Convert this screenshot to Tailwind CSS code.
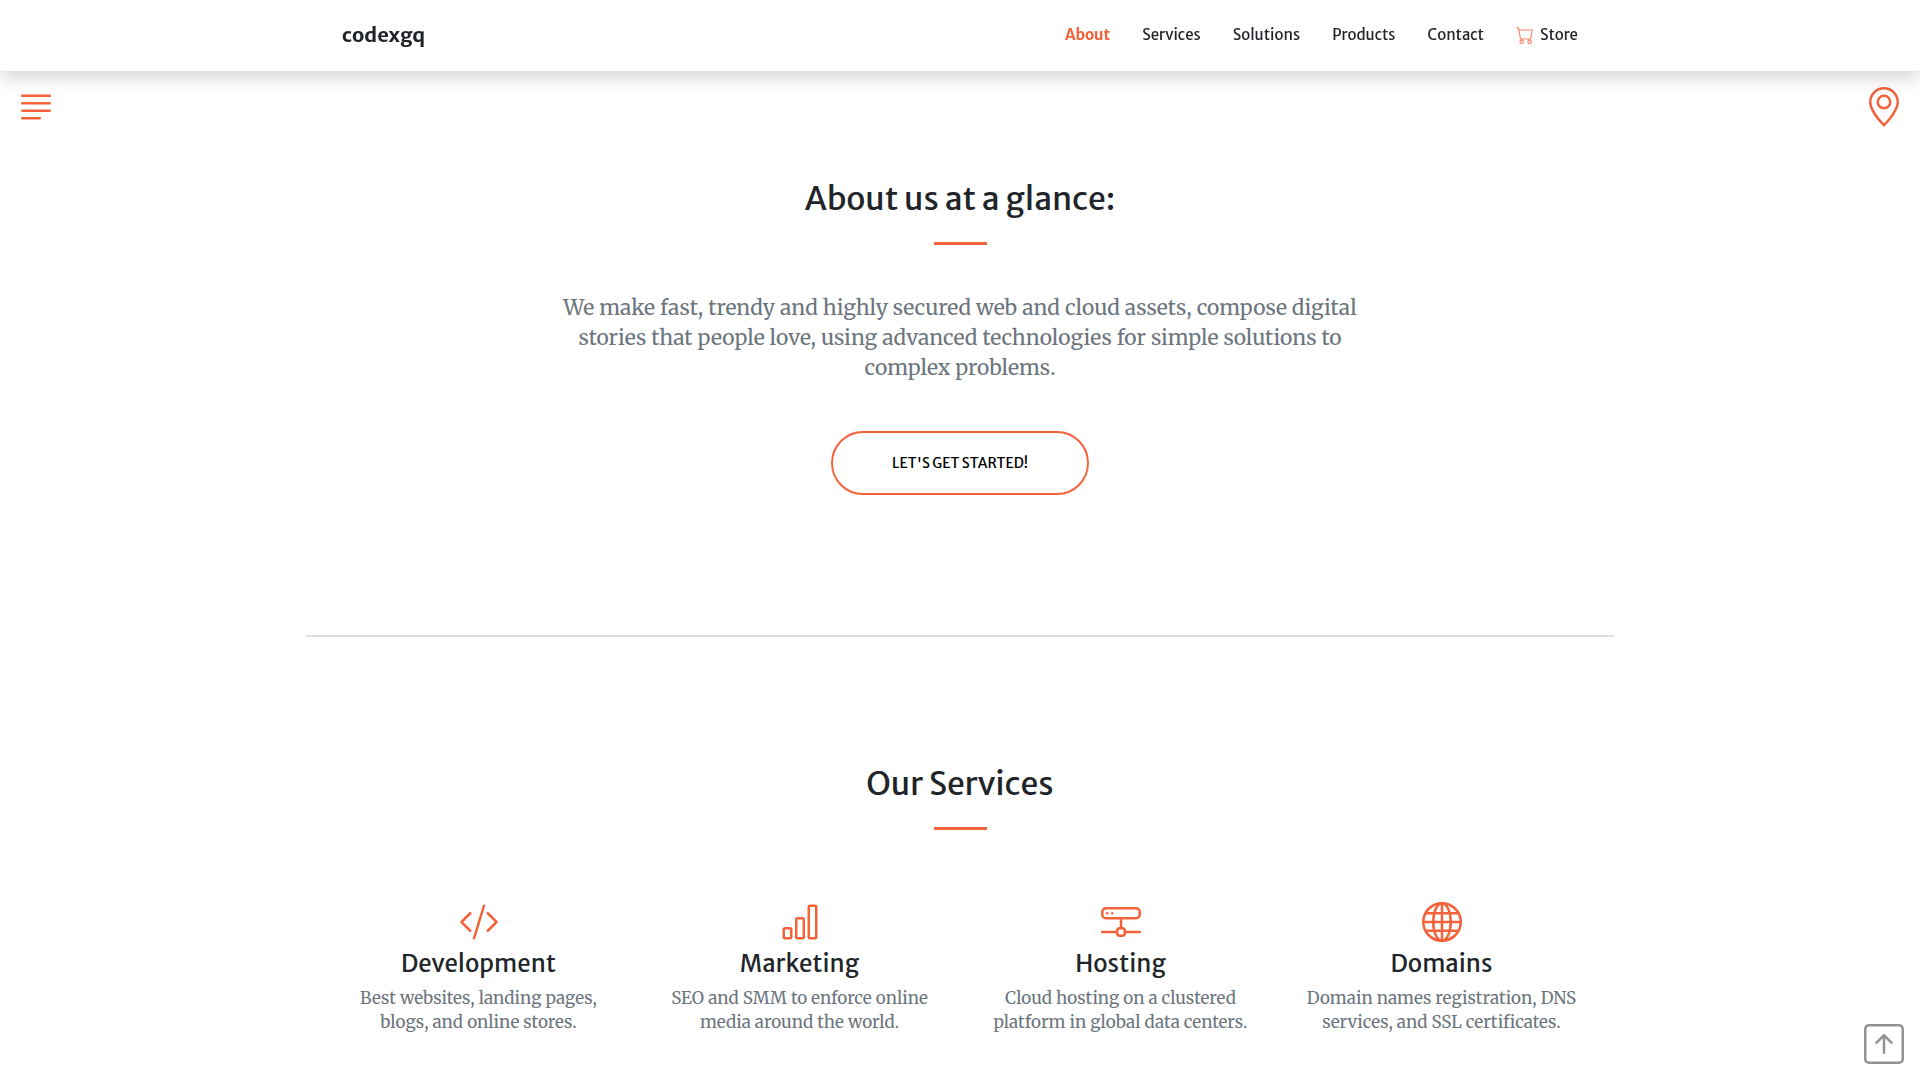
<!DOCTYPE html>
<html lang="en">
<head>
<meta charset="utf-8">
<meta name="viewport" content="width=device-width, initial-scale=1">
<title>codexgq</title>
<script src="https://cdn.jsdelivr.net/npm/@tailwindcss/browser@4"></script>
</head>
<body class="bg-white text-[#212529] font-['Merriweather','Liberation_Serif',serif] overflow-x-hidden">

<header class="fixed inset-x-0 top-0 z-20 bg-white shadow-[0_8px_16px_rgba(0,0,0,0.15)] font-['Merriweather_Sans','Open_Sans',sans-serif]">
  <div class="mx-auto flex h-[71px] max-w-[1308px] items-center justify-between px-9 pb-px">
    <a href="#" class="text-[20px] leading-[30px] font-bold">codexgq</a>
    <nav class="flex items-center gap-8 text-[15px] leading-[22px] font-medium">
      <a href="#about" class="font-bold text-[#f4623a]">About</a>
      <a href="#services">Services</a>
      <a href="#solutions">Solutions</a>
      <a href="#products">Products</a>
      <a href="#contact">Contact</a>
      <a href="#store" class="flex items-center gap-1.5">
        <svg class="size-[18px] text-[#f4623a]/80" viewBox="0 0 16 16" fill="currentColor" aria-hidden="true"><path d="M0 1.5A.5.5 0 0 1 .5 1H2a.5.5 0 0 1 .485.379L2.89 3H14.5a.5.5 0 0 1 .491.592l-1.5 8A.5.5 0 0 1 13 12H4a.5.5 0 0 1-.491-.408L2.01 3.607 1.61 2H.5a.5.5 0 0 1-.5-.5zM3.102 4l1.313 7h8.17l1.313-7H3.102zM5 12a2 2 0 1 0 0 4 2 2 0 0 0 0-4zm7 0a2 2 0 1 0 0 4 2 2 0 0 0 0-4zm-7 1a1 1 0 1 1 0 2 1 1 0 0 1 0-2zm7 0a1 1 0 1 1 0 2 1 1 0 0 1 0-2z"/></svg>
        Store
      </a>
    </nav>
  </div>
</header>

<button type="button" aria-label="Menu" class="fixed top-[87px] left-4 z-10 text-[#f4623a]">
  <svg class="size-10" viewBox="0 0 16 16" fill="none" stroke="currentColor" stroke-linecap="round"><path d="M2.5 3.5h11M2.5 6.5h11M2.5 9.5h11M2.5 12.5h7"/></svg>
</button>
<button type="button" aria-label="Location" class="fixed top-[87px] right-4 z-10 text-[#f4623a]">
  <svg class="size-10" viewBox="0 0 16 16" fill="currentColor"><path d="M12.166 8.94c-.524 1.062-1.234 2.12-1.96 3.07A31.493 31.493 0 0 1 8 14.58a31.481 31.481 0 0 1-2.206-2.57c-.726-.95-1.436-2.008-1.96-3.07C3.304 7.867 3 6.862 3 6a5 5 0 0 1 10 0c0 .862-.305 1.867-.834 2.94zM8 16s6-5.686 6-10A6 6 0 0 0 2 6c0 4.314 6 10 6 10z"/><path d="M8 8a2 2 0 1 1 0-4 2 2 0 0 1 0 4zm0 1a3 3 0 1 0 0-6 3 3 0 0 0 0 6z"/></svg>
</button>
<a href="#about" aria-label="Back to top" class="fixed right-4 bottom-4 z-10 text-[#909294]">
  <svg class="size-10" viewBox="0 0 16 16" fill="currentColor"><path d="M15 2a1 1 0 0 0-1-1H2a1 1 0 0 0-1 1v12a1 1 0 0 0 1 1h12a1 1 0 0 0 1-1V2zM0 2a2 2 0 0 1 2-2h12a2 2 0 0 1 2 2v12a2 2 0 0 1-2 2H2a2 2 0 0 1-2-2V2zm8.5 9.5a.5.5 0 0 1-1 0V5.707L5.354 7.854a.5.5 0 1 1-.708-.708l3-3a.5.5 0 0 1 .708 0l3 3a.5.5 0 0 1-.708.708L8.5 5.707V11.5z"/></svg>
</a>

<main class="mx-auto max-w-[1308px]">
  <section id="about" class="flex flex-col items-center border-b-2 border-[#dee0e1] px-3 pt-[179px] pb-[140px] text-center">
    <h2 class="font-['Merriweather_Sans','Open_Sans',sans-serif] text-[32px] leading-[40px] font-normal">About us at a glance:</h2>
    <div class="mt-[23px] h-[3px] w-[53px] bg-[#f4623a]"></div>
    <p class="mt-12 max-w-[820px] text-[21px] leading-[30px] text-[#6c757d]">We make fast, trendy and highly secured web and cloud assets, compose digital stories that people love, using advanced technologies for simple solutions to complex problems.</p>
    <a href="#services" class="mt-12 flex h-[64px] w-[258px] items-center justify-center rounded-full border-2 border-[#f4623a] font-['Merriweather_Sans','Open_Sans',sans-serif] text-[14px] leading-[21px] font-medium text-black uppercase">Let's Get Started!</a>
  </section>

  <section id="services" class="flex flex-col items-center px-3 pt-[127px] pb-16 text-center">
    <h2 class="font-['Merriweather_Sans','Open_Sans',sans-serif] text-[32px] leading-[40px] font-normal">Our Services</h2>
    <div class="mt-[23px] h-[3px] w-[53px] bg-[#f4623a]"></div>
    <div class="mt-[72px] grid w-full grid-cols-2 lg:grid-cols-4">
      <article class="flex flex-col items-center px-3">
        <svg class="size-10 text-[#f4623a]" viewBox="0 0 16 16" fill="currentColor" aria-hidden="true"><path d="M10.478 1.647a.5.5 0 1 0-.956-.294l-4 13a.5.5 0 0 0 .956.294l4-13zM4.854 4.146a.5.5 0 0 1 0 .708L1.707 8l3.147 3.146a.5.5 0 0 1-.708.708l-3.5-3.5a.5.5 0 0 1 0-.708l3.5-3.5a.5.5 0 0 1 .708 0zm6.292 0a.5.5 0 0 0 0 .708L14.293 8l-3.147 3.146a.5.5 0 0 0 .708.708l3.5-3.5a.5.5 0 0 0 0-.708l-3.5-3.5a.5.5 0 0 0-.708 0z"/></svg>
        <h3 class="mt-2 mb-2 font-['Merriweather_Sans','Open_Sans',sans-serif] text-[24px] leading-[28px] font-normal">Development</h3>
        <p class="max-w-[270px] text-[17px] leading-[24px] text-[#6c757d]">Best websites, landing pages, blogs, and online stores.</p>
      </article>
      <article class="flex flex-col items-center px-3">
        <svg class="size-10 text-[#f4623a]" viewBox="0 0 16 16" fill="currentColor" aria-hidden="true"><path d="M4 11H2v3h2v-3zm5-4H7v7h2V7zm5-5v12h-2V2h2zm-2-1a1 1 0 0 0-1 1v12a1 1 0 0 0 1 1h2a1 1 0 0 0 1-1V2a1 1 0 0 0-1-1h-2zM6 7a1 1 0 0 1 1-1h2a1 1 0 0 1 1 1v7a1 1 0 0 1-1 1H7a1 1 0 0 1-1-1V7zm-5 4a1 1 0 0 1 1-1h2a1 1 0 0 1 1 1v3a1 1 0 0 1-1 1H2a1 1 0 0 1-1-1v-3z"/></svg>
        <h3 class="mt-2 mb-2 font-['Merriweather_Sans','Open_Sans',sans-serif] text-[24px] leading-[28px] font-normal">Marketing</h3>
        <p class="max-w-[270px] text-[17px] leading-[24px] text-[#6c757d]">SEO and SMM to enforce online media around the world.</p>
      </article>
      <article class="flex flex-col items-center px-3">
        <svg class="size-10 text-[#f4623a]" viewBox="0 0 16 16" fill="currentColor" aria-hidden="true"><path d="M4.5 5a.5.5 0 1 0 0-1 .5.5 0 0 0 0 1zM3 4.5a.5.5 0 1 1-1 0 .5.5 0 0 1 1 0z"/><path d="M0 4a2 2 0 0 1 2-2h12a2 2 0 0 1 2 2v1a2 2 0 0 1-2 2H8.5v3a1.5 1.5 0 0 1 1.5 1.5h5.5a.5.5 0 0 1 0 1H10A1.5 1.5 0 0 1 8.5 14h-1A1.5 1.5 0 0 1 6 12.5H.5a.5.5 0 0 1 0-1H6A1.5 1.5 0 0 1 7.5 10V7H2a2 2 0 0 1-2-2V4zm1 0v1a1 1 0 0 0 1 1h12a1 1 0 0 0 1-1V4a1 1 0 0 0-1-1H2a1 1 0 0 0-1 1zm6 7.5v1a.5.5 0 0 0 .5.5h1a.5.5 0 0 0 .5-.5v-1a.5.5 0 0 0-.5-.5h-1a.5.5 0 0 0-.5.5z"/></svg>
        <h3 class="mt-2 mb-2 font-['Merriweather_Sans','Open_Sans',sans-serif] text-[24px] leading-[28px] font-normal">Hosting</h3>
        <p class="max-w-[270px] text-[17px] leading-[24px] text-[#6c757d]">Cloud hosting on a clustered platform in global data centers.</p>
      </article>
      <article class="flex flex-col items-center px-3">
        <svg class="size-10 text-[#f4623a]" viewBox="0 0 16 16" fill="none" stroke="currentColor" aria-hidden="true"><circle cx="8" cy="8" r="7.5"/><ellipse cx="8" cy="8" rx="3.5" ry="7.5"/><path d="M8 .5v15M.5 8h15M1.5 4.5h13M1.5 11.5h13"/></svg>
        <h3 class="mt-2 mb-2 font-['Merriweather_Sans','Open_Sans',sans-serif] text-[24px] leading-[28px] font-normal">Domains</h3>
        <p class="max-w-[270px] text-[17px] leading-[24px] text-[#6c757d]">Domain names registration, DNS services, and SSL certificates.</p>
      </article>
    </div>
  </section>
</main>
</body>
</html>
